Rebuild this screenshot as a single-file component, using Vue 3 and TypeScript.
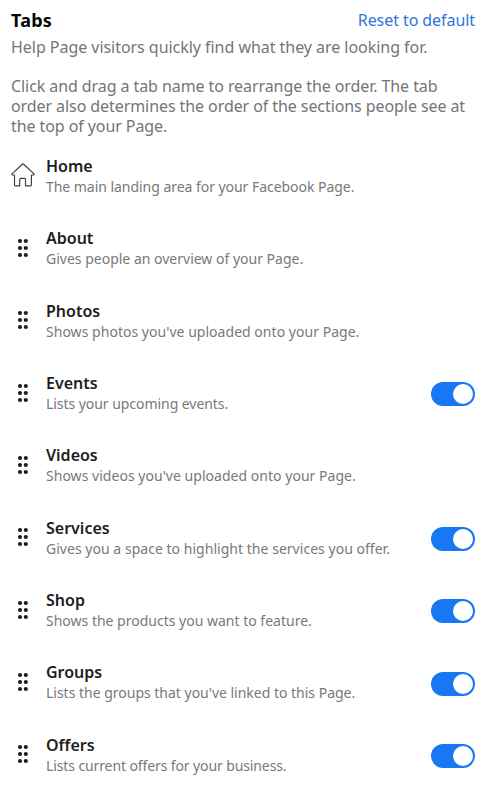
<script setup lang="ts">
import { ref } from 'vue'

interface Tab {
  name: string
  description: string
  tracking: number
  fixed?: boolean
  enabled?: boolean
}

const tabs = ref<Tab[]>([
  { name: 'Home', description: 'The main landing area for your Facebook Page.', tracking: -0.04, fixed: true },
  { name: 'About', description: 'Gives people an overview of your Page.', tracking: 0 },
  { name: 'Photos', description: "Shows photos you've uploaded onto your Page.", tracking: 0.03 },
  { name: 'Events', description: 'Lists your upcoming events.', tracking: -0.05, enabled: true },
  { name: 'Videos', description: "Shows videos you've uploaded onto your Page.", tracking: 0.03 },
  { name: 'Services', description: 'Gives you a space to highlight the services you offer.', tracking: 0.03, enabled: true },
  { name: 'Shop', description: 'Shows the products you want to feature.', tracking: 0, enabled: true },
  { name: 'Groups', description: "Lists the groups that you've linked to this Page.", tracking: -0.01, enabled: true },
  { name: 'Offers', description: 'Lists current offers for your business.', tracking: -0.11, enabled: true },
])
</script>

<template>
  <main class="settings">
    <header class="header">
      <h1 class="title">Tabs</h1>
      <a class="reset">Reset to default</a>
    </header>
    <p class="intro">Help Page visitors quickly find what they are looking for.</p>
    <p class="intro second">
      Click and drag a tab name to rearrange the order. The tab<br />
      order also determines the order of the sections people see at<br />
      the top of your Page.
    </p>
    <ul class="list">
      <li v-for="tab in tabs" :key="tab.name" class="row">
        <svg v-if="tab.fixed" class="icon home" viewBox="0 0 24 24" fill="none">
          <path
            d="M11.6 1 1 10.8Q.4 11.8 1.5 12H3.5V22Q3.5 22.8 4.3 22.8H8.7V16.4Q8.7 15.4 9.7 15.4H13.5Q14.5 15.4 14.5 16.4V22.8H19.6Q20.4 22.8 20.4 22V12H22.4Q23.6 11.8 23 10.8L12.4 1Q12 .7 11.6 1Z"
            stroke="#3c3e41" stroke-width="1.15" stroke-linejoin="round"
          />
        </svg>
        <svg v-else class="icon" viewBox="0 0 24 24" fill="#1c1e21">
          <template v-for="y in [5, 12, 19]" :key="y">
            <circle cx="9" :cy="y" r="2.1" />
            <circle cx="14.8" :cy="y" r="2.1" />
          </template>
        </svg>
        <div class="text">
          <h2 class="name">{{ tab.name }}</h2>
          <p class="description" :style="{ letterSpacing: tab.tracking + 'px' }">{{ tab.description }}</p>
        </div>
        <button
          v-if="tab.enabled !== undefined"
          class="toggle"
          :class="{ on: tab.enabled }"
          role="switch"
          :aria-checked="tab.enabled"
          :aria-label="tab.name"
          @click="tab.enabled = !tab.enabled"
        >
          <span class="knob"></span>
        </button>
      </li>
    </ul>
  </main>
</template>

<style>
body {
  background: #fff;
}
</style>

<style scoped>
.settings {
  box-sizing: border-box;
  height: 800px;
  overflow: hidden;
  padding: 9px 14px 0 11px;
  font-family: 'Segoe UI', 'Noto Sans', sans-serif;
  color: #1c1e21;
}
h1, h2, p, ul {
  margin: 0;
  padding: 0;
}
.header {
  display: flex;
  justify-content: space-between;
  height: 28px;
  line-height: 22px;
}
.title {
  font-size: 18px;
  font-weight: 700;
  letter-spacing: 0.25px;
  color: #050505;
}
.reset {
  font-size: 16px;
  letter-spacing: -0.07px;
  color: #2f74dc;
  cursor: pointer;
}
.intro {
  font-size: 16px;
  line-height: 20px;
  letter-spacing: -0.04px;
  white-space: nowrap;
  color: #737578;
}
.second {
  margin-top: 19px;
  letter-spacing: -0.08px;
}
.list {
  margin-top: 20px;
  list-style: none;
}
.row {
  display: flex;
  height: 72.35px;
}
.icon {
  flex: none;
  width: 24px;
  height: 24px;
  margin: 7.6px 11px 0 0;
}
.home {
  margin-top: 7px;
}
.text {
  flex: 1;
}
.name {
  font-size: 16px;
  font-weight: 600;
  line-height: 20px;
}
.description {
  font-size: 14px;
  line-height: 22px;
  white-space: nowrap;
  color: #77797c;
}
.toggle {
  flex: none;
  display: flex;
  width: 44px;
  height: 24px;
  margin-top: 9.3px;
  padding: 2px;
  border: 0;
  border-radius: 12px;
  background: #bec3c9;
}
.on {
  justify-content: flex-end;
  background: #1877f2;
}
.knob {
  width: 20px;
  height: 20px;
  border-radius: 50%;
  background: #fff;
}
</style>
